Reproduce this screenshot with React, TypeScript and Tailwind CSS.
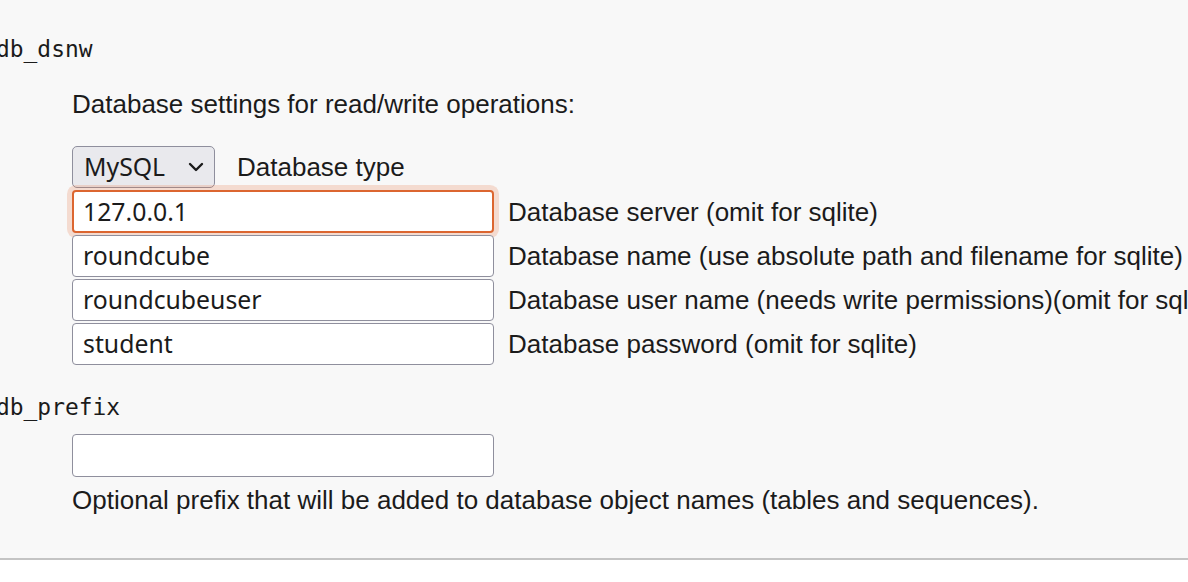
import React from "react";

const sans = "font-['Liberation_Sans',Arial,sans-serif]";
const ui = "font-['Noto_Sans',sans-serif]";
const mono = "font-['DejaVu_Sans_Mono',monospace]";

function Field({ value, label, focused }: { value: string; label?: string; focused?: boolean }) {
  return (
    <div className="flex items-center h-[42px]">
      <div
        className={
          focused
            ? `shrink-0 w-[422px] h-[43px] -mt-px bg-white border-2 border-[#dc6630] rounded-[4px] shadow-[0_0_0_5px_rgba(232,120,70,0.22)] flex items-center pl-[9px] ${ui} text-[24.8px] text-[#1b1b1b]`
            : `shrink-0 w-[422px] h-[42px] bg-white border-[1.5px] border-[#8f8f9d] rounded-[4px] flex items-center pl-[10px] ${ui} text-[24.8px] text-[#1b1b1b]`
        }
      >
        {value}
      </div>
      {label && (
        <span className={`shrink-0 ml-[14px] whitespace-nowrap ${sans} text-[26px] leading-[30px] text-[#1b1b1b]`}>{label}</span>
      )}
    </div>
  );
}

export default function App() {
  return (
    <div className="w-[1188px] h-[582px] overflow-hidden bg-white">
      <div className="h-[560px] bg-[#f8f8f8] border-b-2 border-[#c4c4c4] overflow-hidden">
        <div className={`-ml-[4px] mt-[36px] ${mono} text-[22.9px] leading-[26px] text-[#1b1b1b]`}>db_dsnw</div>
        <div className="ml-[72px]">
          <p className={`mt-[27px] ${sans} text-[26px] leading-[30px] text-[#1b1b1b] whitespace-nowrap`}>
            Database settings for read/write operations:
          </p>
          <div className="mt-[27px] flex items-center h-[42px]">
            <div className={`w-[143px] h-[42px] bg-[#e9e9ed] border-[1.5px] border-[#8f8f9d] rounded-[5px] flex items-center pl-[11px] ${ui} text-[24.8px] text-[#1b1b1b]`}>
              <span>MySQL</span>
              <svg className="ml-auto mr-[10px]" width="16" height="10" viewBox="0 0 16 10">
                <polyline points="2,2 8,8 14,2" fill="none" stroke="#1b1b1b" strokeWidth="2.4" strokeLinecap="round" strokeLinejoin="round" />
              </svg>
            </div>
            <span className={`ml-[22px] ${sans} text-[26px] leading-[30px] text-[#1b1b1b]`}>Database type</span>
          </div>
          <div className="mt-[3px] flex flex-col gap-[2px]">
            <Field value="127.0.0.1" label="Database server (omit for sqlite)" focused />
            <Field value="roundcube" label="Database name (use absolute path and filename for sqlite)" />
            <Field value="roundcubeuser" label="Database user name (needs write permissions)(omit for sqlite)" />
            <Field value="student" label="Database password (omit for sqlite)" />
          </div>
        </div>
        <div className={`-ml-[4px] mt-[29px] ${mono} text-[22.9px] leading-[26px] text-[#1b1b1b]`}>db_prefix</div>
        <div className="ml-[72px]">
          <div className="mt-[14px] w-[422px] h-[43px] bg-white border-[1.5px] border-[#8f8f9d] rounded-[4px]" />
          <p className={`mt-[8px] ${sans} text-[26px] leading-[30px] text-[#1b1b1b] whitespace-nowrap`}>
            Optional prefix that will be added to database object names (tables and sequences).
          </p>
        </div>
      </div>
    </div>
  );
}
